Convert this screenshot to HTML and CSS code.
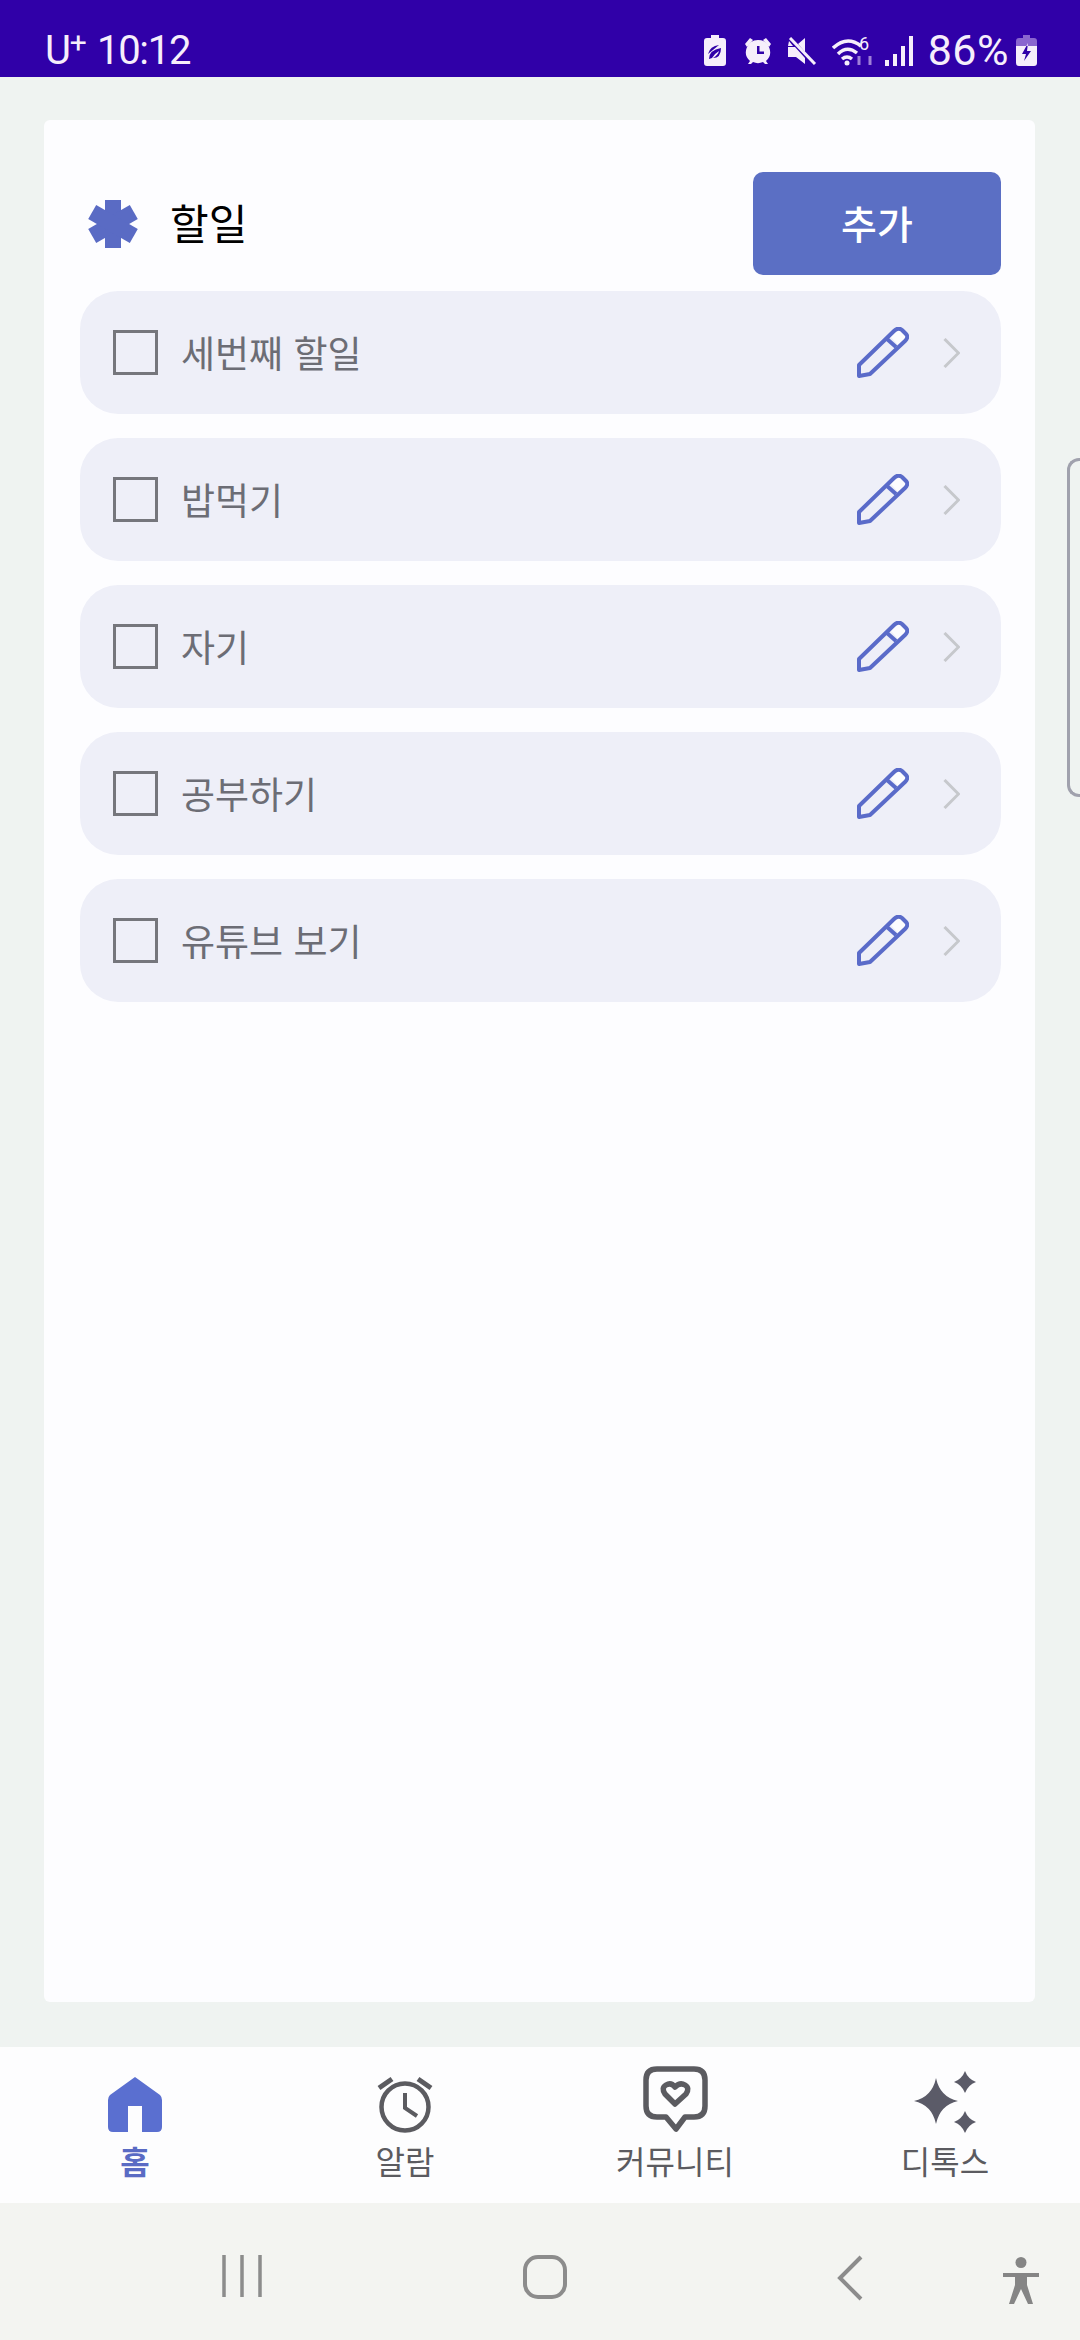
FILE: index.html
```html
<!DOCTYPE html>
<html lang="ko">
<head>
<meta charset="utf-8">
<title>할일</title>
<link rel="stylesheet" href="styles.css">
</head>
<body>
<svg class="defs" width="0" height="0" aria-hidden="true">
  <symbol id="pencil" viewBox="0 0 52 52">
    <path d="M33 9 L38 4 Q41 2 44 4 L48 8 Q50 10 47 13 L41 18 Z" fill="#ffffff" opacity=".8"/>
    <path d="M2 38 L37 4 Q41 0 45 3 L49 7 Q52 10 48 14 L13 47 L2 49 Z" fill="none" stroke="#5a6bc9" stroke-width="4" stroke-linejoin="round"/>
    <path d="M30 12 L39 20" fill="none" stroke="#5a6bc9" stroke-width="4"/>
  </symbol>
  <symbol id="chev" viewBox="0 0 17 30">
    <path d="M1.5 1 L15.5 15 L1.5 29" fill="none" stroke="#c6c8cc" stroke-width="3"/>
  </symbol>
</svg>

<div class="status">
  <div class="clock"><span class="carrier">U<sup>+</sup></span> 10:12</div>
  <div class="status-right">
    <svg class="s-bat" width="22" height="31" viewBox="0 0 22 31"><path fill-rule="evenodd" fill="#f6eefb" d="M7 0h8v3h4q3 0 3 3v22q0 3-3 3H3q-3 0-3-3V6q0-3 3-3h4z M5 24q0-9 12-11q0 10-8 10q5-3 6-7q-5 3-7 7z M4 19q2-8 11-9" /></svg>
    <svg class="s-alarm" width="28" height="28" viewBox="0 0 28 28"><path fill="#f6eefb" d="M1 7 L6 1 L9 3 L3 10 Z M27 7 L22 1 L19 3 L25 10 Z"/><path fill-rule="evenodd" fill="#f6eefb" d="M14 3a12 12 0 0 1 8 21l2 3h-3l-2-2a12 12 0 0 1-10 0l-2 2H4l2-3A12 12 0 0 1 14 3z M13 9v8h7v-2.500h-4.500V9z"/></svg>
    <svg class="s-mute" width="30" height="28" viewBox="0 0 30 28"><path fill="#f6eefb" d="M1 9h5L2 4z M1 10h7l10 11v6l-9-7H1z M11 7l7-6v14z"/><path d="M3 1 L28 27" stroke="#f6eefb" stroke-width="3"/></svg>
    <svg class="s-wifi" width="45" height="40" viewBox="0 -10 45 40"><path d="M1 12 Q15 -1 29 10 M6 18 Q15 9 25 17 M10 23 Q15 19 20 23" fill="none" stroke="#f6eefb" stroke-width="3.500"/><circle cx="15" cy="27" r="2.500" fill="#f6eefb"/><text x="27" y="14" class="wifi-six">6</text><path d="M27 20v9M38 20v9" stroke="#9f80d8" stroke-width="3"/></svg>
    <svg class="s-signal" width="29" height="30" viewBox="0 0 29 30"><path d="M2 24v6M10 18v12M18 10v20M26 0v30" stroke="#f6eefb" stroke-width="4"/></svg>
    <div class="pct">86%</div>
    <svg class="s-bat2" width="21" height="31" viewBox="0 0 21 31"><path fill="#8a66cf" d="M7 0h7v3h4q3 0 3 3v5H0V6q0-3 3-3h4z"/><path fill-rule="evenodd" fill="#f6eefb" d="M0 11h21v17q0 3-3 3H3q-3 0-3-3z M12 8L6 19h4l-2 7 7-10h-4z"/></svg>
  </div>
</div>

<main class="page">
  <section class="card">
    <header class="card-head">
      <svg class="star" width="50" height="48" viewBox="0 0 50 48">
        <g fill="#5a6bc4">
          <rect x="17" y="0" width="16" height="48"/>
          <rect x="17" y="0" width="16" height="48" transform="rotate(60 25 24)"/>
          <rect x="17" y="0" width="16" height="48" transform="rotate(120 25 24)"/>
        </g>
      </svg>
      <h1 class="title">할일</h1>
      <button class="add">추가</button>
    </header>
    <ul class="list">
      <li class="row"><span class="box"></span><span class="label">세번째 할일</span><svg class="pen"><use href="#pencil"/></svg><svg class="chev"><use href="#chev"/></svg></li>
      <li class="row"><span class="box"></span><span class="label">밥먹기</span><svg class="pen"><use href="#pencil"/></svg><svg class="chev"><use href="#chev"/></svg></li>
      <li class="row"><span class="box"></span><span class="label">자기</span><svg class="pen"><use href="#pencil"/></svg><svg class="chev"><use href="#chev"/></svg></li>
      <li class="row"><span class="box"></span><span class="label">공부하기</span><svg class="pen"><use href="#pencil"/></svg><svg class="chev"><use href="#chev"/></svg></li>
      <li class="row"><span class="box"></span><span class="label">유튜브 보기</span><svg class="pen"><use href="#pencil"/></svg><svg class="chev"><use href="#chev"/></svg></li>
    </ul>
  </section>
  <div class="scroll-hint"></div>
</main>

<nav class="tabs">
  <a class="tab active">
    <span class="tab-icon"><svg width="54" height="56" viewBox="0 0 54 56"><path fill-rule="evenodd" fill="#5a6fd0" d="M27 0 L52 18 Q54 20 54 23 V50 Q54 55 49 55 H34 V29 H20 V55 H5 Q0 55 0 50 V23 Q0 20 2 18 Z"/></svg></span>
    <span class="tab-label">홈</span>
  </a>
  <a class="tab">
    <span class="tab-icon"><svg width="56" height="57" viewBox="0 0 56 57"><circle cx="28" cy="31" r="23.500" fill="none" stroke="#5b5b60" stroke-width="4.500"/><path d="M28 17V32L40 40" fill="none" stroke="#5b5b60" stroke-width="4"/><path d="M2 12 L15 3 M54 12 L41 3" stroke="#5b5b60" stroke-width="5"/></svg></span>
    <span class="tab-label">알람</span>
  </a>
  <a class="tab">
    <span class="tab-icon"><svg width="65" height="67" viewBox="0 0 65 67"><path d="M14 3 H51 Q62 3 62 14 V40 Q62 51 51 51 H42 L33 63 L23 51 H14 Q3 51 3 40 V14 Q3 3 14 3 Z" fill="none" stroke="#5b5b60" stroke-width="5.500" stroke-linejoin="round"/><path d="M32 38 L22 28 Q18 22 23 19 Q28 16 32 21 Q37 16 42 19 Q47 22 43 28 Z" fill="none" stroke="#5b5b60" stroke-width="5.500" stroke-linejoin="round"/></svg></span>
    <span class="tab-label">커뮤니티</span>
  </a>
  <a class="tab">
    <span class="tab-icon"><svg width="62" height="62" viewBox="0 0 62 62"><path fill="#5b5b68" d="M22 7 Q26 26 44 30 Q26 34 22 53 Q18 34 0 30 Q18 26 22 7 Z M51 0 Q54 8 62 11 Q54 14 51 22 Q48 14 40 11 Q48 8 51 0 Z M51 40 Q54 48 62 51 Q54 54 51 62 Q48 54 40 51 Q48 48 51 40 Z"/></svg></span>
    <span class="tab-label">디톡스</span>
  </a>
</nav>

<footer class="sysnav">
  <svg class="sys-recents" width="40" height="42" viewBox="0 0 40 42"><path d="M2 0V42M20 0V42M38 0V42" stroke="#8c8c8c" stroke-width="3.500"/></svg>
  <svg class="sys-home" width="44" height="44" viewBox="0 0 44 44"><rect x="2" y="2" width="40" height="40" rx="13" fill="none" stroke="#8c8c8c" stroke-width="4"/></svg>
  <svg class="sys-back" width="26" height="46" viewBox="0 0 26 46"><path d="M24 2 L3 23 L24 44" fill="none" stroke="#8c8c8c" stroke-width="4"/></svg>
  <svg class="sys-a11y" width="38" height="48" viewBox="0 0 38 48"><circle cx="19" cy="5.500" r="5.500" fill="#858585"/><path d="M1 16 H37 V20 H25 L25 28 L31 47 H26 L19 32 L12 47 H7 L13 28 L13 20 H1 Z" fill="#858585"/></svg>
</footer>
</body>
</html>
```
FILE: styles.css
```css
* { box-sizing: border-box; }
html, body { margin: 0; padding: 0; }
body {
  width: 1080px;
  height: 2340px;
  display: flex;
  flex-direction: column;
  overflow: hidden;
  background: #eff3f1;
  font-family: "Noto Sans CJK KR", "Noto Sans", sans-serif;
}
.defs { position: absolute; }

.status {
  height: 77px;
  flex: none;
  background: #3000a8;
  color: #f6eefb;
  display: flex;
  justify-content: space-between;
  align-items: center;
  padding: 24px 43px 0 45px;
  font-family: Roboto, sans-serif;
}
.clock { font-size: 40px; line-height: 53px; letter-spacing: -1.3px; white-space: nowrap; }
.carrier { margin-right: 3px; }
.carrier sup { font-size: 30px; line-height: 0; vertical-align: 11px; }
.status-right { display: flex; align-items: center; }
.status-right svg { display: block; flex: none; }
.s-alarm { margin-left: 18px; }
.s-mute { margin-left: 15px; }
.s-wifi { margin: -10px 0 0 15px; }
.s-signal { margin-left: 8px; }
.pct { margin-left: 14px; font-size: 43px; line-height: 53px; letter-spacing: 0.5px; }
.s-bat2 { margin-left: 7px; }
.wifi-six { font-family: Roboto, sans-serif; font-size: 18px; fill: #f6eefb; }

.page {
  position: relative;
  flex: 1;
  min-height: 0;
  padding: 43px 45px 45px 44px;
  display: flex;
}
.card {
  flex: 1;
  background: #fdfdff;
  border-radius: 6px;
  padding: 52px 34px 0 36px;
}
.card-head {
  display: flex;
  align-items: center;
  height: 103px;
  margin-bottom: 16px;
}
.star { margin-left: 8px; flex: none; }
.title {
  margin: 0 0 0 32px;
  padding-bottom: 3px;
  font-size: 42px;
  font-weight: 400;
  line-height: 56px;
  color: #000;
}
.add {
  margin-left: auto;
  width: 248px;
  height: 103px;
  padding: 0 0 4px;
  border: 0;
  border-radius: 10px;
  background: #5b6fc4;
  color: #fff;
  font-family: inherit;
  font-size: 39px;
  font-weight: 500;
}
.list {
  list-style: none;
  margin: 0;
  padding: 0;
  display: flex;
  flex-direction: column;
  gap: 24px;
}
.row {
  height: 123px;
  background: #eeeff8;
  border-radius: 38px;
  display: flex;
  align-items: center;
  padding: 0 41px 0 33px;
}
.box {
  width: 45px;
  height: 45px;
  border: 3px solid #75767c;
  flex: none;
}
.label {
  margin-left: 23px;
  padding-bottom: 2px;
  font-size: 37px;
  line-height: 50px;
  color: #6c6d75;
}
.pen { width: 52px; height: 52px; margin-left: auto; flex: none; }
.chev { width: 17px; height: 30px; margin-left: 34px; flex: none; }

.scroll-hint {
  position: absolute;
  right: 0;
  top: 381px;
  width: 13px;
  height: 339px;
  border: 3px solid #a0a1ad;
  border-right: 0;
  border-radius: 12px 0 0 12px;
}

.tabs {
  flex: none;
  height: 156px;
  background: #fdfdfe;
  display: grid;
  grid-template-columns: repeat(4, 270px);
}
.tab {
  display: flex;
  flex-direction: column;
  align-items: center;
  color: #5b5b60;
}
.tab-icon {
  height: 89px;
  display: flex;
  align-items: flex-end;
  padding-bottom: 3px;
}
.tab-icon svg { display: block; }
.tab-label { margin-top: 2px; font-size: 32px; line-height: 44px; }
.tab.active { color: #5a6bc4; }
.tab.active .tab-label { font-weight: 700; }

.sysnav {
  flex: none;
  height: 137px;
  background: #f3f4f1;
  display: flex;
  align-items: flex-start;
  padding: 52px 43px 0 222px;
}
.sysnav svg { display: block; flex: none; }
.sys-home { margin-left: 261px; }
.sys-back { margin-left: 270px; }
.sys-a11y { margin-left: 139px; margin-top: 2px; }
```
